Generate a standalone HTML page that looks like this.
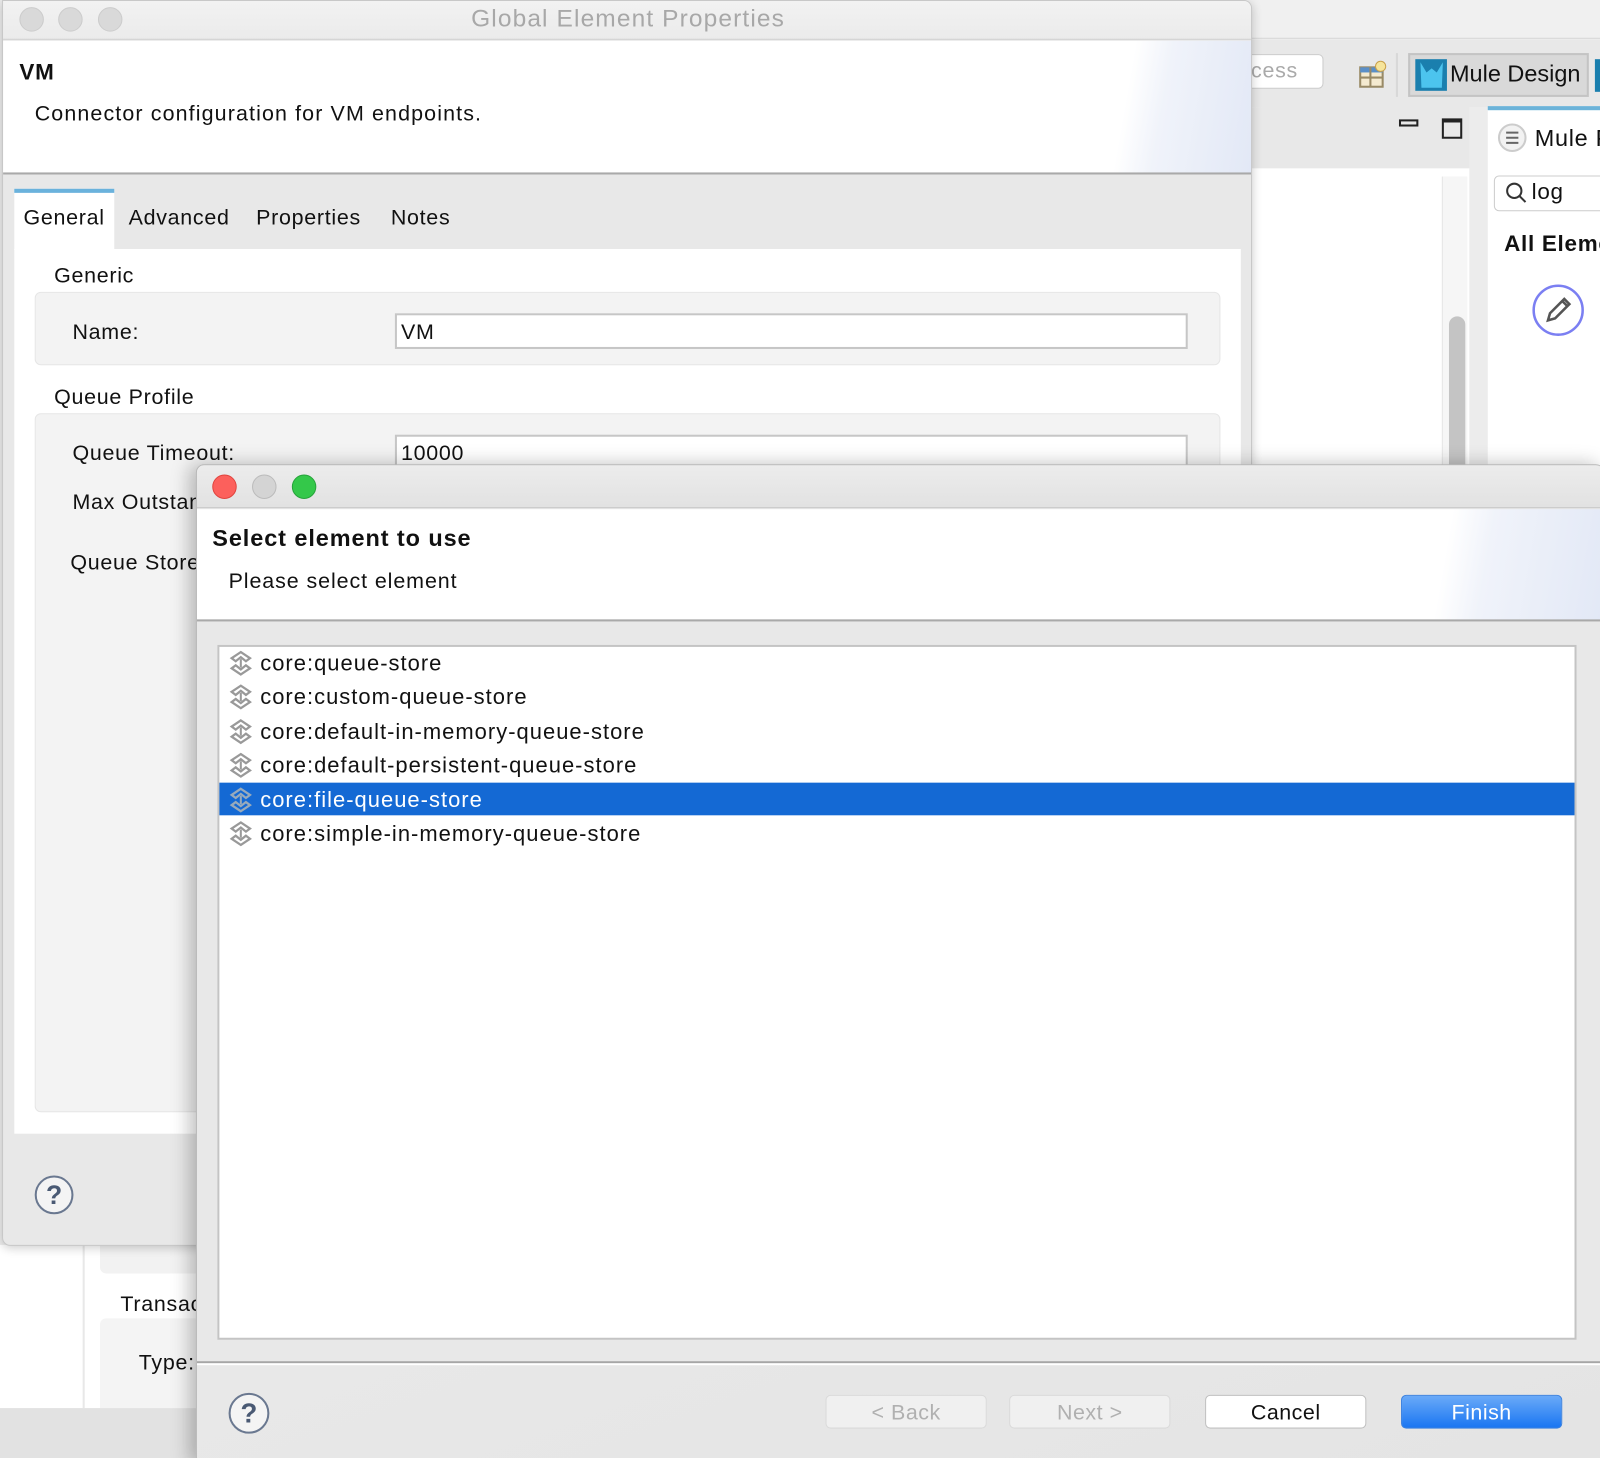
<!DOCTYPE html>
<html><head><meta charset="utf-8"><style>
*{box-sizing:border-box;margin:0;padding:0}
html,body{width:1600px;height:1458px;overflow:hidden;background:#ececec;font-family:"Liberation Sans",sans-serif;color:#111}
#w{position:absolute;left:0;top:0;width:1568px;height:1429px;transform:scale(1.02041);transform-origin:0 0;overflow:hidden}
.a{position:absolute}
.t{position:absolute;white-space:nowrap;letter-spacing:0.7px}
.btn{position:absolute;height:33px;width:158px;border-radius:5px;font-size:21px;text-align:center;line-height:33px;letter-spacing:0.5px}
</style></head><body><div id="w">
<div class="a" style="left:1200px;top:0;width:368px;height:38px;background:#f0f0f0;border-bottom:1px solid #d6d6d6"></div>
<div class="a" style="left:1200px;top:39px;width:368px;height:66px;background:#e8e8e8"></div>
<div class="a" style="left:1200px;top:53px;width:97px;height:34px;background:#fff;border:1px solid #ccc;border-radius:5px"></div>
<div class="t" style="left:1226px;top:58px;font-size:21px;color:#aaa">cess</div>
<svg class="a" style="left:1331px;top:58px" width="30" height="30"><rect x="2" y="8" width="22" height="19" fill="#f4ead0" stroke="#998a66" stroke-width="2"/><rect x="2" y="8" width="22" height="5" fill="#5a8fc8"/><line x1="12" y1="8" x2="12" y2="27" stroke="#998a66" stroke-width="2"/><line x1="2" y1="18" x2="24" y2="18" stroke="#998a66" stroke-width="2"/><circle cx="22" cy="7" r="5" fill="#f6e49a" stroke="#c9a04a"/></svg>
<div class="a" style="left:1368px;top:52px;width:2px;height:43px;background:#d8d8d8"></div>
<div class="a" style="left:1380px;top:52px;width:177px;height:43px;background:#d9d9d9;border:2px solid #c4c4c4"></div>
<div class="a" style="left:1387px;top:58px;width:31px;height:31px;background:#1a7fae"></div>
<svg class="a" style="left:1387px;top:58px" width="31" height="31"><path d="M5 3 L11 13 L16 9 L21 13 L27 3 L26 28 L6 28 Z" fill="#4cc4ee"/></svg>
<div class="t" style="left:1421px;top:59px;font-size:23px;letter-spacing:0">Mule Design</div>
<div class="a" style="left:1563px;top:58px;width:6px;height:32px;background:#1a7fae"></div>
<div class="a" style="left:1227px;top:105px;width:213px;height:60px;background:#e8e8e8"></div>
<div class="a" style="left:1371px;top:117px;width:19px;height:7px;border:2px solid #222"></div>
<div class="a" style="left:1413px;top:116px;width:20px;height:20px;border:2px solid #222;border-top-width:4px"></div>
<div class="a" style="left:1227px;top:165px;width:213px;height:1215px;background:#fff"></div>
<div class="a" style="left:1413px;top:173px;width:25px;height:1207px;background:#f6f6f6;border-left:1px solid #e6e6e6"></div>
<div class="a" style="left:1420px;top:310px;width:16px;height:1070px;background:#c4c4c4;border-radius:8px"></div>
<div class="a" style="left:1440px;top:105px;width:18px;height:1275px;background:#ececec"></div>
<div class="a" style="left:1458px;top:104px;width:110px;height:1276px;background:#fff;border-top:4px solid #6cb3d9"></div>
<svg class="a" style="left:1466px;top:119px" width="32" height="32"><circle cx="16" cy="16" r="13" fill="#f2f2f2" stroke="#ccc" stroke-width="2"/><path d="M10 11h12M10 16h12M10 21h12" stroke="#666" stroke-width="2"/></svg>
<div class="t" style="left:1504px;top:122px;font-size:23px">Mule P</div>
<div class="a" style="left:1464px;top:172px;width:120px;height:35px;background:#fff;border:1px solid #ccc;border-radius:5px"></div>
<svg class="a" style="left:1474px;top:177px" width="24" height="24"><circle cx="10" cy="10" r="7" fill="none" stroke="#333" stroke-width="2"/><line x1="15" y1="15" x2="21" y2="21" stroke="#333" stroke-width="2"/></svg>
<div class="t" style="left:1501px;top:175px;font-size:22px">log</div>
<div class="t" style="left:1474px;top:226px;font-size:22px;font-weight:bold">All Eleme</div>
<svg class="a" style="left:1500px;top:277px" width="54" height="54"><circle cx="27" cy="27" r="24" fill="#fff" stroke="#7b7ff2" stroke-width="2.5"/><path d="M17 37 L19 30 L33 16 L38 21 L24 35 Z M31 18 L36 23" fill="none" stroke="#555" stroke-width="2.5"/></svg>
<div class="a" style="left:0;top:1220px;width:192px;height:160px;background:#fff"></div>
<div class="a" style="left:81px;top:1220px;width:2px;height:160px;background:#e8e8e8"></div>
<div class="a" style="left:98px;top:1220px;width:100px;height:28px;background:#f2f2f2;border-radius:0 0 6px 6px"></div>
<div class="a" style="left:98px;top:1292px;width:100px;height:88px;background:#f4f4f4;border-radius:6px 0 0 0"></div>
<div class="t" style="left:118px;top:1267px;font-size:21px">Transac</div>
<div class="t" style="left:136px;top:1324px;font-size:21px">Type:</div>
<div class="a" style="left:0;top:1380px;width:192px;height:49px;background:#e2e2e2"></div>
<div class="a" style="left:2px;top:0;width:1225px;height:1221px;background:#e8e8e8;border:1px solid #c8c8c8;border-radius:0 8px 8px 8px;overflow:hidden;box-shadow:0 2px 10px rgba(0,0,0,.2)">
 <div class="a" style="left:0;top:0;width:1225px;height:38px;background:linear-gradient(#f2f2f2,#ebebeb);border-bottom:1px solid #d0d0d0"></div>
 <div class="a" style="left:16px;top:6px;width:24px;height:24px;border-radius:50%;background:#d9d9d9;border:1px solid #ccc"></div>
 <div class="a" style="left:54px;top:6px;width:24px;height:24px;border-radius:50%;background:#d9d9d9;border:1px solid #ccc"></div>
 <div class="a" style="left:93px;top:6px;width:24px;height:24px;border-radius:50%;background:#d9d9d9;border:1px solid #ccc"></div>
 <div class="t" style="left:0;width:1225px;text-align:center;top:4px;font-size:24px;color:#a8a8a8;letter-spacing:1.1px">Global Element Properties</div>
 <div class="a" style="left:0;top:39px;width:1225px;height:131px;background:linear-gradient(100deg,#fff 0%,#fff 89%,#f0f3fa 92%,#e2e8f6 100%);border-bottom:2px solid #a9a9a9"></div>
 <div class="t" style="left:16px;top:57px;font-size:22px;font-weight:bold">VM</div>
 <div class="t" style="left:31px;top:99px;font-size:21px;letter-spacing:1.1px">Connector configuration for VM endpoints.</div>
 <div class="a" style="left:11px;top:184px;width:98px;height:60px;background:#fff;border-top:4px solid #6ab2dc"></div>
 <div class="t" style="left:20px;top:201px;font-size:21px">General</div>
 <div class="t" style="left:123px;top:201px;font-size:21px">Advanced</div>
 <div class="t" style="left:248px;top:201px;font-size:21px">Properties</div>
 <div class="t" style="left:380px;top:201px;font-size:21px">Notes</div>
 <div class="a" style="left:11px;top:243px;width:1202px;height:867px;background:#fff"></div>
 <div class="t" style="left:50px;top:258px;font-size:21px">Generic</div>
 <div class="a" style="left:31px;top:285px;width:1162px;height:72px;background:#f3f3f3;border:1px solid #e6e6e6;border-radius:6px"></div>
 <div class="t" style="left:68px;top:313px;font-size:21px">Name:</div>
 <div class="a" style="left:384px;top:306px;width:777px;height:35px;background:#fff;border:2px solid #c6c6c6"></div>
 <div class="t" style="left:390px;top:313px;font-size:21px">VM</div>
 <div class="t" style="left:50px;top:377px;font-size:21px">Queue Profile</div>
 <div class="a" style="left:31px;top:404px;width:1162px;height:685px;background:#f3f3f3;border:1px solid #e6e6e6;border-radius:6px"></div>
 <div class="t" style="left:68px;top:432px;font-size:21px">Queue Timeout:</div>
 <div class="a" style="left:384px;top:425px;width:777px;height:35px;background:#fff;border:2px solid #c6c6c6"></div>
 <div class="t" style="left:390px;top:432px;font-size:21px">10000</div>
 <div class="t" style="left:68px;top:480px;font-size:21px">Max Outstanding</div>
 <div class="t" style="left:66px;top:539px;font-size:21px">Queue Store</div>
 <svg class="a" style="left:30px;top:1150px" width="40" height="40"><circle cx="20" cy="20" r="18" fill="#f4f4f4" stroke="#6a7890" stroke-width="2"/><text x="20" y="29" text-anchor="middle" font-family="Liberation Sans" font-weight="bold" font-size="26" fill="#4a5a74">?</text></svg>
</div>
<div class="a" style="left:192px;top:455px;width:1380px;height:980px;background:#e8e8e8;border:1px solid #b8b8b8;border-radius:8px 8px 0 0;overflow:hidden;box-shadow:-6px 0 18px rgba(0,0,0,.25)">
 <div class="a" style="left:0;top:0;width:1380px;height:42px;background:linear-gradient(#ececec,#e2e2e2);border-bottom:1px solid #c8c8c8"></div>
 <div class="a" style="left:15px;top:9px;width:24px;height:24px;border-radius:50%;background:#fc605c;border:1px solid #e0443e"></div>
 <div class="a" style="left:54px;top:9px;width:24px;height:24px;border-radius:50%;background:#d4d4d4;border:1px solid #bbb"></div>
 <div class="a" style="left:93px;top:9px;width:24px;height:24px;border-radius:50%;background:#34c84a;border:1px solid #26a33a"></div>
 <div class="a" style="left:0;top:43px;width:1380px;height:110px;background:linear-gradient(100deg,#fff 0%,#fff 88%,#f0f3fa 91%,#e2e8f6 100%);border-bottom:2px solid #a9a9a9"></div>
 <div class="t" style="left:15px;top:58px;font-size:23px;font-weight:bold;letter-spacing:0.9px">Select element to use</div>
 <div class="t" style="left:31px;top:102px;font-size:21px;letter-spacing:0.9px">Please select element</div>
 <div class="a" style="left:20px;top:176px;width:1332px;height:681px;background:#fff;border:2px solid #c4c4c4"></div>
 <div class="a" style="left:22px;top:311px;width:1328px;height:32px;background:#1469d4"></div>
 <div id="rows"></div>
 <div class="a" style="left:0;top:878px;width:1380px;height:2px;background:#a6a6a6"></div>
 <div class="a" style="left:0;top:880px;width:1380px;height:2px;background:#fff"></div>
 <div class="a" style="left:0;top:882px;width:1380px;height:100px;background:linear-gradient(160deg,#e8e8e8,#e4e4e4)"></div>
 <svg class="a" style="left:30px;top:908px" width="42" height="42"><circle cx="21" cy="21" r="19" fill="#f4f4f4" stroke="#6a7890" stroke-width="2"/><text x="21" y="30" text-anchor="middle" font-family="Liberation Sans" font-weight="bold" font-size="27" fill="#4a5a74">?</text></svg>
 <div class="btn" style="left:616px;top:911px;background:#f0f0f0;border:1px solid #dadada;color:#b0b0b0">&lt; Back</div>
 <div class="btn" style="left:796px;top:911px;background:#f0f0f0;border:1px solid #dadada;color:#b0b0b0">Next &gt;</div>
 <div class="btn" style="left:988px;top:911px;background:#fff;border:1px solid #c0c0c0;color:#111">Cancel</div>
 <div class="btn" style="left:1180px;top:911px;background:linear-gradient(#6aaaf8,#1a76f2);border:1px solid #3c82e0;color:#fff">Finish</div>
</div>
<script>
var items=["core:queue-store","core:custom-queue-store","core:default-in-memory-queue-store","core:default-persistent-queue-store","core:file-queue-store","core:simple-in-memory-queue-store"];
var h="";
items.forEach(function(s,i){var y=178+i*33.4;var sel=i==4;
h+='<svg class="a" style="left:30px;top:'+(y+3)+'px" width="26" height="26"><path d="M13 2 L22 8 L18 11 L13 7 L8 11 L4 8 Z M13 24 L22 18 L18 15 L13 19 L8 15 L4 18 Z" fill="none" stroke="'+(sel?'#9ab':'#999')+'" stroke-width="2.2"/><line x1="13" y1="9" x2="13" y2="17" stroke="'+(sel?'#9ab':'#999')+'" stroke-width="2"/></svg>';
h+='<div class="t" style="left:62px;top:'+(y+4)+'px;font-size:21.5px;letter-spacing:1px;color:'+(sel?'#fff':'#111')+'">'+s+'</div>';});
document.getElementById("rows").outerHTML=h;
</script>
</div></body></html>
